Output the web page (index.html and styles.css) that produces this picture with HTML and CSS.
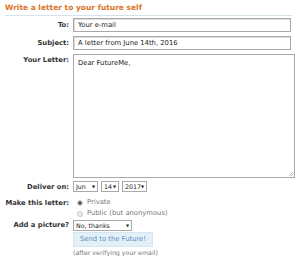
FILE: index.html
```html
<!DOCTYPE html>
<html>
<head>
<meta charset="utf-8">
<link rel="stylesheet" href="styles.css">
</head>
<body>
<div class="page">
  <div class="title">Write a letter to your future self</div>
  <div class="form">
    <div class="row r-to">
      <div class="label">To:</div>
      <div class="field"><div class="input">Your e-mail</div></div>
    </div>
    <div class="row r-subj">
      <div class="label">Subject:</div>
      <div class="field"><div class="input">A letter from June 14th, 2016</div></div>
    </div>
    <div class="row r-letter">
      <div class="label">Your Letter:</div>
      <div class="field"><div class="textarea">Dear FutureMe,<span class="grip"></span></div></div>
    </div>
    <div class="row r-deliver">
      <div class="label">Deliver on:</div>
      <div class="field selects">
        <div class="select s-mon">Jun<span class="arr">▼</span></div>
        <div class="select s-day">14<span class="arr">▼</span></div>
        <div class="select s-year">2017<span class="arr">▼</span></div>
      </div>
    </div>
    <div class="row r-make">
      <div class="label">Make this letter:</div>
      <div class="field radios">
        <div class="radio"><span class="dot on"></span>Private</div>
        <div class="radio"><span class="dot"></span>Public (but anonymous)</div>
      </div>
    </div>
    <div class="row r-pic">
      <div class="label">Add a picture?</div>
      <div class="field"><div class="select s-pic">No, thanks<span class="arr">▼</span></div></div>
    </div>
    <div class="row r-btn">
      <div class="label"></div>
      <div class="field">
        <div class="button">Send to the Future!</div>
        <div class="note">(after verifying your email)</div>
      </div>
    </div>
  </div>
</div>
</body>
</html>
```
FILE: styles.css
```css
html, body { margin: 0; padding: 0; background: #fff; }
body { font-family: "DejaVu Sans", Verdana, sans-serif; font-size: 6.8px; color: #333; }
.page { width: 300px; height: 256px; overflow: hidden; position: relative; }
.title {
  margin: 3px 8px 0 5px;
  padding-bottom: 3px;
  color: #d9731f;
  font-weight: bold;
  font-size: 7.5px;
  border-bottom: 1px solid #d6e4ea;
  line-height: 9px;
}
.form { display: flex; flex-direction: column; padding-top: 2px; }
.row { display: flex; }
.label {
  width: 69px;
  text-align: right;
  font-weight: bold;
  color: #333;
  padding-right: 4px;
  flex: none;
}
.field { flex: none; }
.input {
  width: 208px;
  height: 10px;
  border: 1px solid #a9a9a9;
  box-shadow: inset 1px 1px 0 #ddd;
  padding: 1px 4px;
  line-height: 10px;
  color: #222;
}
.r-to .label, .r-subj .label { line-height: 14px; }
.r-subj { margin-top: 4px; }
.r-letter { margin-top: 4px; }
.r-letter .label { line-height: 12px; }
.textarea {
  position: relative;
  width: 212px;
  height: 114px;
  border: 1px solid #a9a9a9;
  padding: 4px;
  line-height: 9px;
  color: #222;
}
.grip {
  position: absolute; right: 1px; bottom: 1px; width: 5px; height: 5px;
  background: linear-gradient(135deg, transparent 50%, #bbb 50%, #bbb 60%, transparent 60%, transparent 75%, #bbb 75%, #bbb 85%, transparent 85%);
}
.r-deliver { margin-top: 3px; }
.r-deliver .label { line-height: 12px; }
.selects { display: flex; gap: 3px; }
.select {
  box-sizing: border-box;
  height: 11px;
  border: 1px solid #a9a9a9;
  padding: 0 2px 0 2px;
  line-height: 9px;
  font-size: 6.3px;
  display: flex;
  justify-content: space-between;
  align-items: center;
  color: #222;
  background: #fff;
}
.arr { font-size: 4px; color: #222; }
.s-mon { width: 25px; }
.s-day { width: 18px; }
.s-year { width: 25px; }
.r-make { margin-top: 4px; }
.r-make .label { line-height: 10px; padding-top: 1px; }
.radios { display: flex; flex-direction: column; gap: 2px; padding-top: 1px; }
.radio { display: flex; align-items: center; color: #777; line-height: 9px; padding-left: 4px; }
.dot { width: 6px; height: 6px; border-radius: 50%; border: 1px solid #c8c8c8; background: #eee; margin-right: 4px; box-sizing: border-box; }
.dot.on { background: radial-gradient(circle, #555 0 1.5px, #eee 2px); }
.r-pic { margin-top: 1px; }
.r-pic .label { line-height: 12px; }
.s-pic { width: 59px; margin-top: 1px; }
.r-btn { margin-top: 1px; }
.button {
  width: 78px;
  height: 13px;
  line-height: 13px;
  text-align: center;
  background: #e4f0f8;
  border: 1px solid #d6e6f1;
  color: #5b8fc1;
}
.note { margin-top: 2px; color: #777; font-size: 6.3px; line-height: 8px; }
```
